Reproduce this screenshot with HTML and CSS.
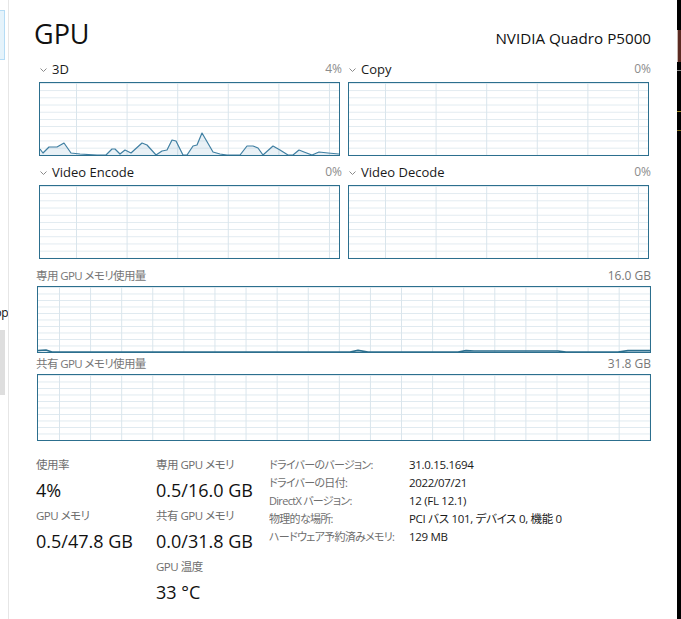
FILE: index.html
```html
<!DOCTYPE html>
<html lang="ja">
<head>
<meta charset="utf-8">
<title>GPU</title>
<link rel="stylesheet" href="styles.css">
</head>
<body>
<div class="app">
  <aside class="nav">
    <div class="nav-sel"></div>
    <div class="nav-text"><span>Desktop</span></div>
    <div class="nav-box"></div>
  </aside>

  <main class="panel">
    <header class="head">
      <h1 class="title">GPU</h1>
      <div class="model">NVIDIA Quadro P5000</div>
    </header>

    <section class="engines">
      <div class="engine">
        <div class="eng-label">
          <svg class="chev" viewBox="0 0 7 4"><polyline points="0.5,0.5 3.5,3.5 6.5,0.5"/></svg>
          <span class="eng-name">3D</span>
          <span class="eng-val">4%</span>
        </div>
        <div class="graph small">
          <svg class="plot" viewBox="0 0 299 72" preserveAspectRatio="none">
            <path class="area" d="M0,66 L3,70 L9,64 L17,64 L24,60 L31,70 L40,71 L57,72 L66,72 L72,66 L75,66 L80,71 L85,67 L91,70 L102,60 L107,62 L116,72 L122,68 L127,67 L132,57 L136,58 L143,72 L147,72 L153,63 L157,62 L162,50 L173,69 L180,71 L187,72 L200,72 L207,63 L213,63 L218,65 L223,72 L233,63 L240,67 L248,72 L253,72 L259,67 L264,69 L272,72 L279,69 L288,70 L299,71 L299,72 L0,72 Z"/>
            <polyline class="line" points="0,66 3,70 9,64 17,64 24,60 31,70 40,71 57,72 66,72 72,66 75,66 80,71 85,67 91,70 102,60 107,62 116,72 122,68 127,67 132,57 136,58 143,72 147,72 153,63 157,62 162,50 173,69 180,71 187,72 200,72 207,63 213,63 218,65 223,72 233,63 240,67 248,72 253,72 259,67 264,69 272,72 279,69 288,70 299,71"/>
          </svg>
        </div>
      </div>
      <div class="engine">
        <div class="eng-label">
          <svg class="chev" viewBox="0 0 7 4"><polyline points="0.5,0.5 3.5,3.5 6.5,0.5"/></svg>
          <span class="eng-name">Copy</span>
          <span class="eng-val">0%</span>
        </div>
        <div class="graph small"></div>
      </div>
      <div class="engine">
        <div class="eng-label">
          <svg class="chev" viewBox="0 0 7 4"><polyline points="0.5,0.5 3.5,3.5 6.5,0.5"/></svg>
          <span class="eng-name">Video Encode</span>
          <span class="eng-val">0%</span>
        </div>
        <div class="graph small"></div>
      </div>
      <div class="engine">
        <div class="eng-label">
          <svg class="chev" viewBox="0 0 7 4"><polyline points="0.5,0.5 3.5,3.5 6.5,0.5"/></svg>
          <span class="eng-name">Video Decode</span>
          <span class="eng-val">0%</span>
        </div>
        <div class="graph small"></div>
      </div>
    </section>

    <section class="mem">
      <div class="mem-label first"><span class="jp">専用 GPU メモリ使用量</span><span>16.0 GB</span></div>
      <div class="graph wide">
        <svg class="plot" viewBox="0 0 612 65" preserveAspectRatio="none">
          <path class="memarea" d="M0,63.5 L8,63 L14,65 L312,65 L320,63.4 L330,65 L420,65 L428,63.6 L436,64 L520,64 L528,65 L580,65 L590,63.6 L612,63.6 L612,65 L0,65 Z"/>
          <polyline class="memline" points="0,63.5 8,63 14,65 312,65 320,63.4 330,65 420,65 428,63.6 436,64 520,64 528,65 580,65 590,63.6 612,63.6"/>
        </svg>
      </div>
      <div class="mem-label"><span class="jp">共有 GPU メモリ使用量</span><span>31.8 GB</span></div>
      <div class="graph wide"></div>
    </section>

    <section class="stats">
      <div class="stat-col c1">
        <div class="s-label">使用率</div>
        <div class="s-value">4%</div>
        <div class="s-label">GPU メモリ</div>
        <div class="s-value">0.5/47.8 GB</div>
      </div>
      <div class="stat-col c2">
        <div class="s-label">専用 GPU メモリ</div>
        <div class="s-value">0.5/16.0 GB</div>
        <div class="s-label">共有 GPU メモリ</div>
        <div class="s-value">0.0/31.8 GB</div>
        <div class="s-label">GPU 温度</div>
        <div class="s-value">33 °C</div>
      </div>
      <dl class="info">
        <dt>ドライバーのバージョン:</dt><dd>31.0.15.1694</dd>
        <dt>ドライバーの日付:</dt><dd>2022/07/21</dd>
        <dt>DirectX バージョン:</dt><dd>12 (FL 12.1)</dd>
        <dt>物理的な場所:</dt><dd>PCI バス 101, デバイス 0, 機能 0</dd>
        <dt>ハードウェア予約済みメモリ:</dt><dd>129 MB</dd>
      </dl>
    </section>
  </main>

  <div class="desk">
    <div class="desk-win"></div>
    <div class="desk-rule"></div>
    <div class="desk-yel"></div>
  </div>
</div>
</body>
</html>
```

FILE: styles.css
```css
* { box-sizing: border-box; }

html, body {
  margin: 0;
  padding: 0;
  background: #fff;
}

body {
  font-family: "Open Sans", "Noto Sans CJK JP", sans-serif;
  color: #1a1a1a;
  font-feature-settings: "palt";
}

.app {
  display: flex;
  width: 681px;
  height: 619px;
  overflow: hidden;
}

/* left navigation remnant */
.nav {
  flex: none;
  width: 9px;
  border-right: 1px solid #e6e6e6;
  display: flex;
  flex-direction: column;
  overflow: hidden;
}
.nav-sel {
  margin-top: 10px;
  width: 5px;
  height: 50px;
  background: #e5f3fb;
  border: 1px solid #b5dcf5;
  border-left: none;
}
.nav-text {
  margin-top: 244px;
  height: 18px;
  width: 8px;
  display: flex;
  justify-content: flex-end;
  font-size: 12px;
  line-height: 18px;
  letter-spacing: -0.5px;
  white-space: nowrap;
  color: #111;
}
.nav-box {
  margin-top: 8px;
  width: 5px;
  height: 65px;
  background: #dedede;
}

/* main panel */
.panel {
  flex: 1;
  padding: 0 26px 0 27px;
}

.head {
  display: flex;
  justify-content: space-between;
  align-items: baseline;
  height: 60px;
  padding-top: 16px;
}
.title {
  margin: 0 0 0 -2px;
  font-size: 27px;
  font-weight: 400;
  line-height: 36px;
  color: #111;
}
.model {
  font-size: 15.2px;
  line-height: 20px;
  color: #111;
}

.engines {
  display: grid;
  grid-template-columns: 301px 301px;
  column-gap: 8px;
  row-gap: 7px;
  padding-left: 3px;
}
.eng-label {
  display: flex;
  align-items: center;
  height: 22px;
  padding: 1px 0 5px 1px;
  margin-right: -2px;
  line-height: 16px;
}
.chev {
  width: 7px;
  height: 4px;
  margin-right: 5px;
  margin-top: 1px;
  fill: none;
  stroke: #8a8a8a;
  stroke-width: 1;
}
.eng-name {
  font-size: 13px;
  color: #1a1a1a;
}
.eng-val {
  margin-left: auto;
  font-size: 12px;
  color: #8c8c8c;
}

.graph {
  border: 1px solid #2c6f8e;
  background-color: #fff;
}
.graph.small {
  height: 74px;
  background-image:
    linear-gradient(to right, #d9e5ec 1px, transparent 1px),
    linear-gradient(to bottom, #dfe9ef 1px, transparent 1px);
  background-size: 50.6px 100%, 100% 7.2px;
  background-position: 36px 0, 0 0;
}
.graph.wide {
  height: 67px;
  margin-left: 1px;
  background-image:
    linear-gradient(to right, #d9e5ec 1px, transparent 1px),
    linear-gradient(to bottom, #dfe9ef 1px, transparent 1px);
  background-size: 31.1px 100%, 100% 6.5px;
  background-position: 21px 0, 0 0;
}

.plot {
  display: block;
  width: 100%;
  height: 100%;
}
.plot .area {
  fill: rgba(40, 120, 170, 0.1);
}
.plot .line {
  fill: none;
  stroke: #3f7fa2;
  stroke-width: 1.2;
  stroke-linejoin: round;
}
.plot .memarea {
  fill: rgba(40, 120, 170, 0.15);
}
.plot .memline {
  fill: none;
  stroke: #2c6f8e;
  stroke-width: 1.6;
  stroke-linejoin: round;
}

.mem-label {
  display: flex;
  justify-content: space-between;
  height: 21px;
  line-height: 21px;
  font-size: 12px;
  color: #777;
}
.mem-label .jp {
  font-size: 11.5px;
  letter-spacing: -0.6px;
}
.mem-label.first {
  margin-top: 6px;
}

/* stats */
.stats {
  display: flex;
  margin-top: 14px;
}
.stat-col {
  display: flex;
  flex-direction: column;
}
.stat-col.c1 { width: 120px; }
.stat-col.c2 { width: 113px; }
.s-label {
  height: 20px;
  line-height: 20px;
  font-size: 11.5px;
  letter-spacing: -0.5px;
  color: #6e6e6e;
}
.s-value {
  height: 31px;
  line-height: 31px;
  font-size: 18px;
  color: #111;
}

.info {
  display: grid;
  grid-template-columns: 140px auto;
  grid-auto-rows: 18px;
  margin: 0;
  padding-top: 1px;
  font-size: 11px;
  line-height: 18px;
}
.info dt {
  color: #6e6e6e;
  letter-spacing: -0.7px;
  white-space: nowrap;
  overflow: visible;
}
.info dd {
  margin: 0;
  font-size: 11.5px;
  letter-spacing: -0.3px;
  color: #1a1a1a;
  white-space: nowrap;
}

/* desktop strip on the right */
.desk {
  flex: none;
  width: 4px;
  background: #000;
  display: flex;
  flex-direction: column;
  overflow: hidden;
}
.desk-win {
  margin-top: 30px;
  height: 32px;
  background: #5b2a22;
  border-left: 1px solid #c8b7b0;
}
.desk-rule {
  margin-top: 8px;
  height: 1px;
  background: #8a8a8a;
}
.desk-yel {
  margin-top: 40px;
  height: 20px;
  border-top: 1px solid #a08a2a;
  border-bottom: 1px solid #7a6a20;
}
```
